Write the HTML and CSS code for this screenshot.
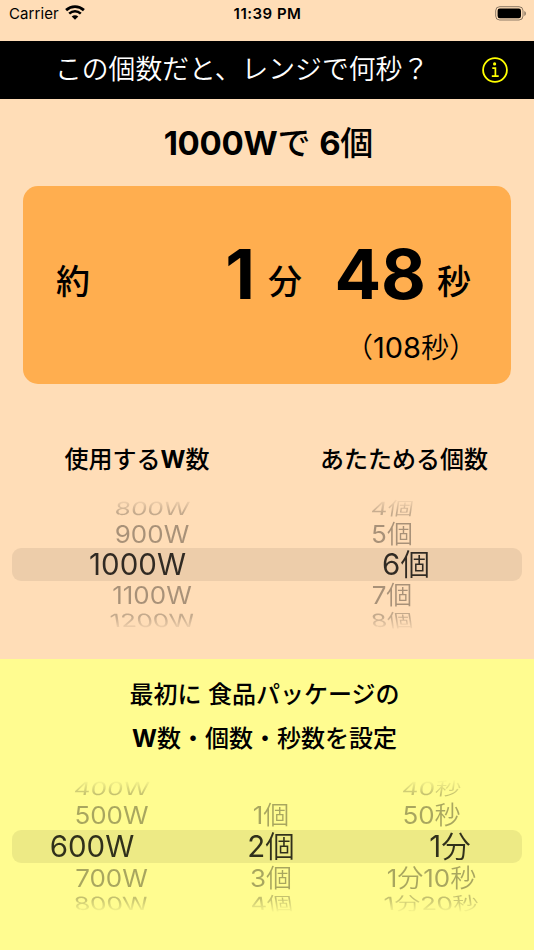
FILE: index.html
```html
<!DOCTYPE html>
<html lang="ja">
<head>
  <meta charset="UTF-8">
  <meta name="viewport" content="width=device-width, initial-scale=1.0">
  <title>この個数だと、レンジで何秒？</title>
  <link rel="stylesheet" href="styles.css">
</head>
<body>
  <div class="status">
    <div class="carrier">
      <span>Carrier</span>
      <svg class="wifi" width="20" height="15" viewBox="0 0 20 15">
        <path d="M1.1 5.1C6.2 .5 13.8 .5 18.9 5.1" fill="none" stroke="#000" stroke-width="2.8"/>
        <path d="M4.2 8.6C7.6 5.5 12.4 5.5 15.8 8.6" fill="none" stroke="#000" stroke-width="2.6"/>
        <path d="M10 14.8L6.7 11.5C8.6 9.8 11.4 9.8 13.3 11.5Z"/>
      </svg>
    </div>
    <div class="clock">11:39 PM</div>
    <svg class="battery" width="32" height="15" viewBox="0 0 32 15">
      <rect x=".7" y=".7" width="27.3" height="13.3" rx="4" fill="none" stroke="#000" stroke-opacity=".45"/>
      <rect x="2.6" y="2.5" width="23.4" height="9.8" rx="2.2"/>
      <path d="M29.4 5C31.3 5.7 31.3 9.2 29.4 9.9Z" fill-opacity=".5"/>
    </svg>
  </div>

  <header class="header">
    <h1>この個数だと、レンジで何秒？</h1>
    <svg class="info" width="26" height="26" viewBox="0 0 26 26" fill="none" stroke="#ffff00">
      <circle cx="13" cy="13" r="11.9" stroke-width="1.8"/>
      <circle cx="12.6" cy="6.9" r="1.6" fill="#ffff00" stroke="none"/>
      <path d="M10.3 11.1H13.4V19M9.8 19.2H16.7" stroke-width="1.7"/>
    </svg>
  </header>

  <main>
    <h2 class="summary"><b>1000W</b>で <b>6</b>個</h2>

    <div class="card">
      <div class="time">
        <span class="about">約</span>
        <span class="num min">1</span>
        <span class="unit">分</span>
        <span class="num sec">48</span>
        <span class="unit">秒</span>
      </div>
      <div class="total"><em>（</em>108<em>秒）</em></div>
    </div>

    <div class="labels">
      <h3>使用する<b>W</b>数</h3>
      <h3>あたためる個数</h3>
    </div>

    <div class="picker two">
      <div class="row far top"><span>800W</span><span>4<em>個</em></span></div>
      <div class="row near"><span>900W</span><span>5<em>個</em></span></div>
      <div class="row selected"><span>1000W</span><span>6<em>個</em></span></div>
      <div class="row near"><span>1100W</span><span>7<em>個</em></span></div>
      <div class="row far bottom"><span>1200W</span><span>8<em>個</em></span></div>
    </div>
  </main>

  <section class="setup">
    <p>最初に 食品パッケージの<br><b>W</b>数・個数・秒数を設定</p>

    <div class="picker three">
      <div class="row far top"><span>400W</span><span></span><span>40<em>秒</em></span></div>
      <div class="row near"><span>500W</span><span>1<em>個</em></span><span>50<em>秒</em></span></div>
      <div class="row selected"><span>600W</span><span>2<em>個</em></span><span>1<em>分</em></span></div>
      <div class="row near"><span>700W</span><span>3<em>個</em></span><span>1<em>分</em>10<em>秒</em></span></div>
      <div class="row far bottom"><span>800W</span><span>4<em>個</em></span><span>1<em>分</em>20<em>秒</em></span></div>
    </div>
  </section>
</body>
</html>
```

FILE: styles.css
```css
* { box-sizing: border-box; }
body { margin: 0; width: 534px; height: 950px; overflow: hidden; display: flex; flex-direction: column; font-family: Inter, "Noto Sans CJK JP", sans-serif; background-color: #ffddb7; color: #000; }
h1, h2, h3, p { margin: 0; }
b { font-weight: 700; }
em { font-style: normal; font-weight: 350; }

.status { height: 41px; padding: 5px 7px 0 9px; display: grid; grid-template-columns: 1fr auto 1fr; align-items: start; font-size: 15px; line-height: 18px; }
.carrier { display: flex; gap: 6px; letter-spacing: 0.1px; }
.clock { padding-right: 1px; font-weight: 600; letter-spacing: 0.5px; }
.battery { justify-self: end; margin-top: 1px; }

.header { height: 58px; padding: 0 26px 0 55px; display: flex; align-items: center; justify-content: space-between; background: #000; }
.header h1 { padding-bottom: 2px; color: #fff; font-size: 26.8px; line-height: 40px; font-weight: 350; white-space: nowrap; }

main { height: 560px; }
.summary { height: 87px; padding-left: 3px; line-height: 89px; text-align: center; font-size: 33px; font-weight: 500; }
.summary b { font-weight: 700; letter-spacing: -0.3px; }

.card { height: 198px; margin: 0 23px; padding: 53px 40px 0 33px; border-radius: 15px; background: #ffae4f; }
.time { height: 89px; display: flex; align-items: baseline; line-height: 70px; font-weight: 500; }
.about, .unit { font-size: 34px; transform: translateY(-5px); }
.num { font-size: 69px; font-weight: 700; text-align: right; }
.min { width: 165px; margin-right: 13px; }
.sec { width: 124px; margin-right: 11px; }
.total { margin-right: -6px; text-align: right; font-size: 29px; line-height: 40px; }
.total em { font-size: 28px; }

.labels { padding-top: 56px; display: grid; grid-template-columns: 274px 260px; text-align: center; }
.labels h3 { height: 40px; font-size: 24px; line-height: 40px; font-weight: 500; }

.picker { margin: 0 12px; -webkit-mask-image: linear-gradient(transparent 1%, #000 12%, #000 88%, transparent 99%); mask-image: linear-gradient(transparent 1%, #000 12%, #000 88%, transparent 99%); }
.two { margin-top: 16px; }
.row { display: grid; align-items: center; justify-items: center; white-space: nowrap; font-weight: 400; }
.two .row { grid-template-columns: 280px 200px; }
.three .row { grid-template-columns: 199px 120px 201px; }
.far { height: 24px; line-height: 22px; font-size: 26px; color: rgba(0, 0, 0, 0.23); }
.near { height: 28px; line-height: 24px; font-size: 26px; color: rgba(0, 0, 0, 0.34); }
.selected { height: 33px; line-height: 31px; font-size: 29.5px; border-radius: 9px; background: rgba(0, 0, 0, 0.07); color: rgba(0, 0, 0, 0.8); }
.near span { transform: translateY(1px) scaleY(0.94); }
.top span { transform: translateY(1px) scaleY(0.7) skewX(-6deg); }
.bottom span { transform: scaleY(0.7) skewX(6deg); }
.three .top span { transform: translateY(-1px) scaleY(0.7) skewX(-6deg); }
.three .near:nth-child(2) span { transform: scaleY(0.94); }
.three .near:nth-child(4) span { transform: translateY(2px) scaleY(0.94); }
.three .bottom span { transform: translateY(1px) scaleY(0.7) skewX(6deg); }
.two .selected span:first-child { padding-right: 29px; }
.two .selected span:last-child { padding-left: 28px; }
.three .selected span:first-child { padding-right: 39px; }
.three .selected span:last-child { padding-left: 37px; }

.setup { height: 291px; padding-top: 14px; background: #fffc90; }
.setup p { text-align: center; padding-right: 5px; font-size: 24px; line-height: 44px; font-weight: 500; }
.three { margin-top: 17px; }
```
